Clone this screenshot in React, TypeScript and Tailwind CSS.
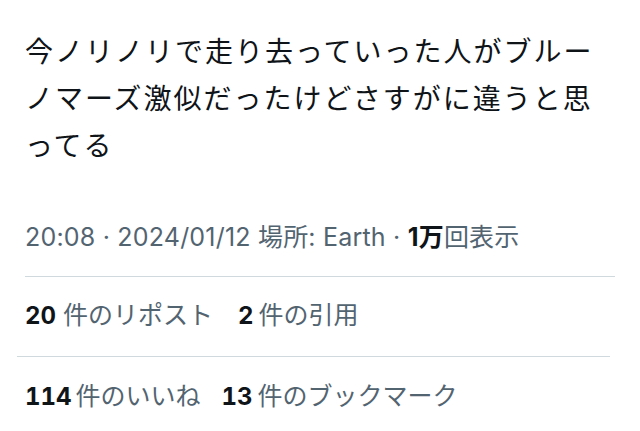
const font = { fontFamily: 'Inter, "Noto Sans CJK JP", sans-serif' };

function Count({ n, label, className = "", gap = "ml-[5px]" }: { n: string; label: string; className?: string; gap?: string }) {
  return (
    <span className={className}>
      <span className="text-[24px] font-bold tabular-nums text-[#0f1419]">{n}</span>
      <span className={gap}>{label}</span>
    </span>
  );
}

export default function App() {
  return (
    <div className="w-[640px] h-[431px] bg-white overflow-hidden" style={font}>
      <p className="ml-[25px] w-[580px] pt-[29px] text-[28px] leading-[47px] tracking-[2px] text-[#0f1419]">
        今ノリノリで走り去っていった人がブルーノマーズ激似だったけどさすがに違うと思ってる
      </p>
      <div className="pl-[25px] mt-[52px] text-[25px] leading-[30px] tracking-[0.2px] text-[#536471]">
        20:08 · 2024/01/12 場所: Earth · <span className="font-bold text-[#0f1419]">1万</span>回表示
      </div>
      <div className="ml-[25px] mr-[25px] mt-[24px] border-t border-[#cfd9de]" />
      <div className="flex items-baseline pl-[25px] pt-[23px] pb-[25px] text-[25px] leading-[30px] text-[#536471]">
        <Count n="20" label="件のリポスト" gap="ml-[7px]" />
        <Count n="2" label="件の引用" className="ml-[25px]" />
      </div>
      <div className="ml-[17px] mr-[30px] border-t border-[#cfd9de]" />
      <div className="flex items-baseline pl-[25px] pt-[24px] text-[25px] leading-[30px] text-[#536471]">
        <Count n="114" label="件のいいね" gap="ml-[4px]" />
        <Count n="13" label="件のブックマーク" className="ml-[21px]" />
      </div>
    </div>
  );
}
